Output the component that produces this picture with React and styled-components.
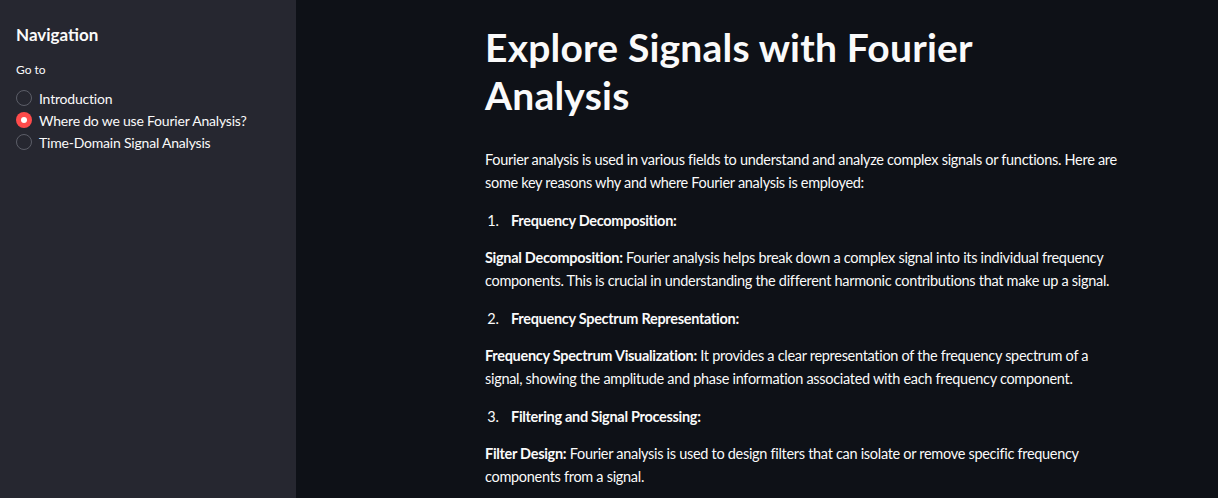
import React from "react";
import styled, { createGlobalStyle } from "styled-components";

const GlobalStyle = createGlobalStyle`
  html, body { margin: 0; padding: 0; background: #0e1117; }
  body { font-family: Lato, "Open Sans", sans-serif; color: #fafafa; -webkit-font-smoothing: antialiased; }
  * { box-sizing: border-box; }
`;

const Layout = styled.div`
  display: flex;
  width: 100%;
  height: 100vh;
  overflow: hidden;
`;

const Sidebar = styled.aside`
  width: 296px;
  flex-shrink: 0;
  background: #262730;
  padding: 24px 16px;
`;

const SideTitle = styled.h2`
  margin: 0;
  font-size: 17px;
  font-weight: 700;
  line-height: 22px;
  color: #fafafa;
`;

const GroupLabel = styled.div`
  margin-top: 13px;
  font-size: 12px;
  line-height: 22px;
  color: #fafafa;
`;

const RadioList = styled.div`
  display: flex;
  flex-direction: column;
  margin-top: 6px;
`;

const RadioRow = styled.label`
  display: flex;
  align-items: center;
  gap: 7px;
  height: 22px;
  font-size: 14px;
  letter-spacing: -0.2px;
  color: #fafafa;
  cursor: pointer;
`;

const RadioDot = styled.span`
  width: 16px;
  height: 16px;
  border-radius: 50%;
  flex-shrink: 0;
  display: flex;
  align-items: center;
  justify-content: center;
  background: ${(p) => (p.$checked ? "#ff4b4b" : "transparent")};
  border: ${(p) => (p.$checked ? "none" : "1px solid #5c5e68")};
  &::after {
    content: "";
    display: ${(p) => (p.$checked ? "block" : "none")};
    width: 6px;
    height: 6px;
    border-radius: 50%;
    background: #fff;
  }
`;

const Main = styled.main`
  flex: 1;
  padding: 23px 0 0 189px;
`;

const Content = styled.div`
  width: 640px;
`;

const Title = styled.h1`
  margin: 0 0 29px;
  font-size: 39px;
  font-weight: 700;
  line-height: 48px;
  letter-spacing: 0.2px;
  color: #fafafa;
  width: 560px;
`;

const Para = styled.p`
  margin: 0 0 14.5px;
  font-size: 14.5px;
  line-height: 23px;
  letter-spacing: -0.3px;
  color: #fafafa;
`;

const List = styled.ol`
  margin: 0 0 14.5px;
  padding-left: 17px;
  font-size: 14.5px;
  line-height: 23px;
  letter-spacing: -0.3px;
  li { padding-left: 9px; }
`;

const items = [
  "Introduction",
  "Where do we use Fourier Analysis?",
  "Time-Domain Signal Analysis",
];

const sections = [
  {
    n: 1,
    head: "Frequency Decomposition:",
    term: "Signal Decomposition:",
    text: "Fourier analysis helps break down a complex signal into its individual frequency components. This is crucial in understanding the different harmonic contributions that make up a signal.",
  },
  {
    n: 2,
    head: "Frequency Spectrum Representation:",
    term: "Frequency Spectrum Visualization:",
    text: "It provides a clear representation of the frequency spectrum of a signal, showing the amplitude and phase information associated with each frequency component.",
  },
  {
    n: 3,
    head: "Filtering and Signal Processing:",
    term: "Filter Design:",
    text: "Fourier analysis is used to design filters that can isolate or remove specific frequency components from a signal.",
  },
];

export default function App() {
  return (
    <>
      <GlobalStyle />
      <Layout>
        <Sidebar>
          <SideTitle>Navigation</SideTitle>
          <GroupLabel>Go to</GroupLabel>
          <RadioList>
            {items.map((it, i) => (
              <RadioRow key={it}>
                <RadioDot $checked={i === 1} />
                {it}
              </RadioRow>
            ))}
          </RadioList>
        </Sidebar>
        <Main>
          <Content>
            <Title>Explore Signals with Fourier Analysis</Title>
            <Para>
              Fourier analysis is used in various fields to understand and analyze complex signals or functions. Here are some key reasons why and where Fourier analysis is employed:
            </Para>
            {sections.map((s) => (
              <React.Fragment key={s.n}>
                <List start={s.n}>
                  <li><strong>{s.head}</strong></li>
                </List>
                <Para>
                  <strong>{s.term}</strong> {s.text}
                </Para>
              </React.Fragment>
            ))}
          </Content>
        </Main>
      </Layout>
    </>
  );
}
